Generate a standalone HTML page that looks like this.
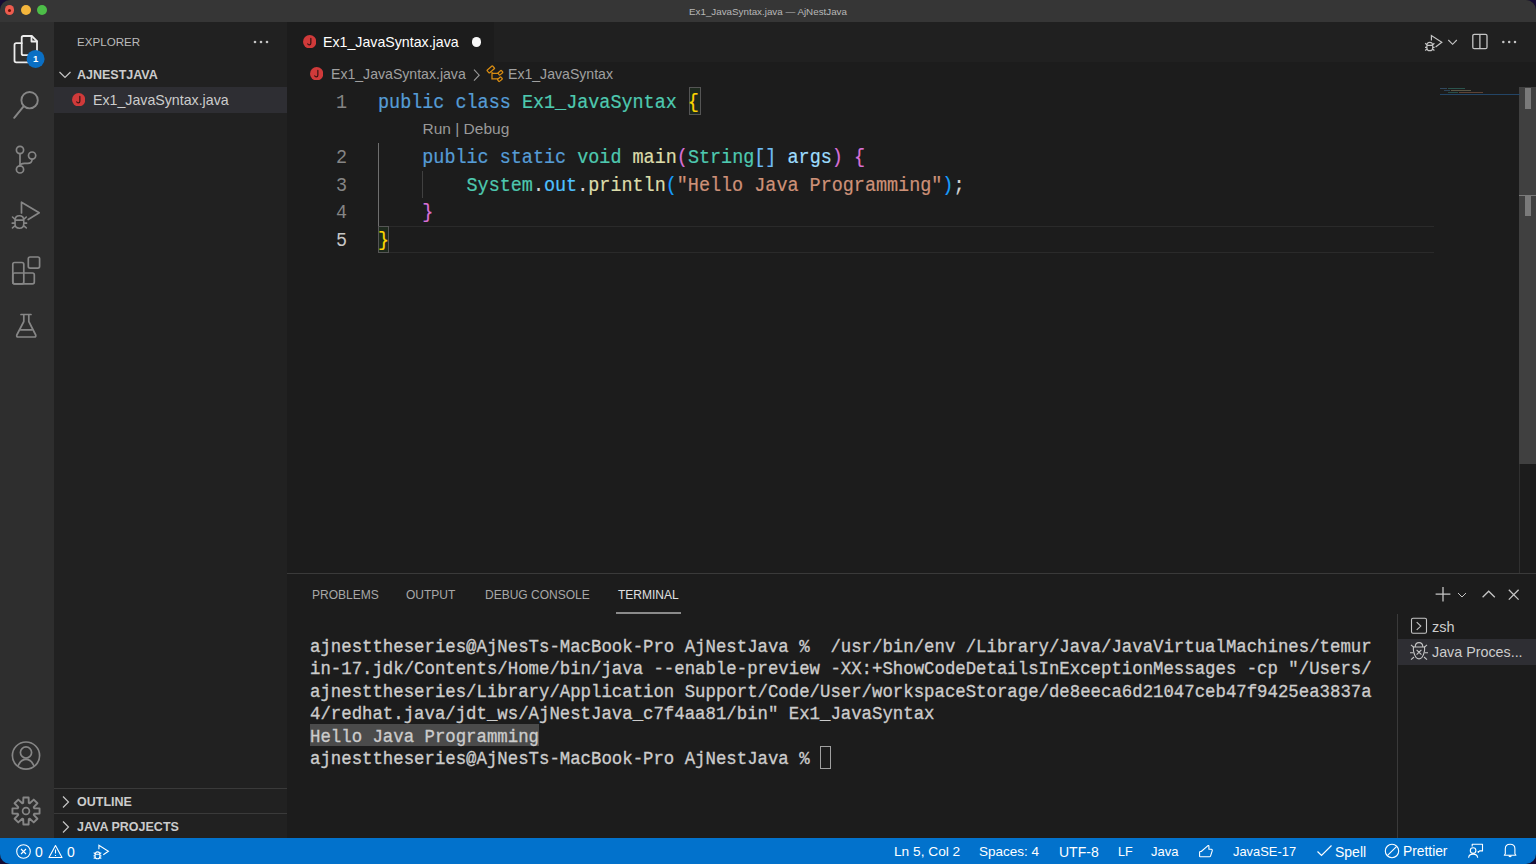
<!DOCTYPE html>
<html><head><meta charset="utf-8">
<style>
*{margin:0;padding:0;box-sizing:border-box}
html,body{width:1536px;height:864px;overflow:hidden;background:#160c34;font-family:"Liberation Sans",sans-serif}
.a{position:absolute}
.mono{font-family:"Liberation Mono",monospace}
#title{left:0;top:0;width:1536px;height:22px;background:#363636}
#act{left:0;top:22px;width:54px;height:816px;background:#2e2e2e}
#side{left:54px;top:22px;width:233px;height:816px;background:#212121}
#tabs{left:287px;top:22px;width:1249px;height:40px;background:#202020}
#editor{left:287px;top:62px;width:1249px;height:512px;background:#1c1c1c}
#panel{left:287px;top:574px;width:1249px;height:264px;background:#1c1c1c}
#pborder{left:287px;top:573px;width:1249px;height:1px;background:#3a3a3a}
#status{left:0;top:838px;width:1536px;height:26px;background:#0272cc;color:#fff}
.ln{position:absolute;left:0;width:60px;text-align:right;color:#858585;font-size:18.45px;transform:scaleY(1.13);transform-origin:0 18.7px}
.code{position:absolute;left:91px;font-size:18.45px;white-space:pre;color:#d4d4d4;-webkit-text-stroke:0.2px;transform:scaleY(1.13);transform-origin:0 18.7px}
.kw{color:#569cd6}.ty{color:#4ec9b0}.fn{color:#dcdcaa}.str{color:#ce9178}.var{color:#9cdcfe}.br1{color:#ffd700}.br2{color:#da70d6}.br3{color:#179fff}.cst{color:#4fc1ff}.arr{color:#6fbdf2}
.term{position:absolute;left:23px;font-size:17.35px;white-space:pre;color:#cccccc;line-height:22.4px;-webkit-text-stroke:0.3px #cccccc;transform:translateY(1.8px) scaleY(1.1);transform-origin:0 15.8px}
.sb{position:absolute;top:0.7px;height:26px;line-height:26px;font-size:14px;color:#fff;white-space:nowrap}
</style></head><body>
<div class="a" id="win" style="left:0;top:0;width:1536px;height:864px;border-radius:10px;overflow:hidden;background:#1c1c1c">
<div id="title" class="a">
  <div class="a" style="left:4.6px;top:5.4px;width:9.8px;height:9.8px;border-radius:50%;background:#ee5c4e"><div class="a" style="left:3.3px;top:3.3px;width:3.2px;height:3.2px;border-radius:50%;background:#701205"></div></div>
  <div class="a" style="left:20.6px;top:5.2px;width:10px;height:10px;border-radius:50%;background:#f4b63c"></div>
  <div class="a" style="left:36.6px;top:5.2px;width:10px;height:10px;border-radius:50%;background:#4dbe48"></div>
  <div class="a" style="left:0;top:0.7px;width:1536px;text-align:center;line-height:22px;font-size:9.8px;color:#b8b8b8">Ex1_JavaSyntax.java — AjNestJava</div>
</div>
<div id="act" class="a">
  <svg class="a" style="left:0;top:0" width="54" height="816" viewBox="0 22 54 816" fill="none" stroke="#868686" stroke-width="1.7" stroke-linejoin="round" stroke-linecap="round">
    <!-- files -->
    <g stroke="#ececec" stroke-width="1.8" stroke-linejoin="round">
      <path d="M23.5 36 H31.8 L37 41.2 V53.5 Q37 55.2 35.3 55.2 H23.5 Q21.7 55.2 21.7 53.5 V37.8 Q21.7 36 23.5 36 Z"/>
      <path d="M31.5 36.2 V41.5 H36.8"/>
      <path d="M21.7 43.2 H16.3 Q14.5 43.2 14.5 45 V60.6 Q14.5 62.4 16.3 62.4 H29"/>
    </g>
    <circle cx="35.6" cy="58.9" r="9" fill="#0a6fc4" stroke="none"/>
    <text x="35.7" y="62.4" fill="#fff" stroke="none" font-family="Liberation Sans" font-weight="bold" font-size="9.5" text-anchor="middle">1</text>
    <!-- search -->
    <circle cx="29.6" cy="100.2" r="8.2" stroke-width="1.9"/>
    <path d="M23.6 106.4 L14.2 117.8" stroke-width="2"/>
    <!-- scm -->
    <circle cx="20" cy="150" r="3.6"/>
    <circle cx="32.1" cy="155.6" r="3.6"/>
    <circle cx="20" cy="169.4" r="3.6"/>
    <path d="M20 153.6 V165.8"/>
    <path d="M32.1 159.3 Q32.1 163.4 27.5 163.4 H24.5 Q20.4 163.4 20 165.8"/>
    <!-- run debug -->
    <path d="M21.5 213 V202.2 L39.2 212.8 L28.2 219.5"/>
    <g transform="translate(19.4 215.8) scale(1.5)" stroke-width="1.07"><path d="M-2.9 3 Q-2.9 0 0 0 Q2.9 0 2.9 3 V5.5 Q2.9 8.3 0 8.3 Q-2.9 8.3 -2.9 5.5 Z M-2.9 2.9 H2.9 M-2.9 2.4 L-4.6 0.8 M2.9 2.4 L4.6 0.8 M-2.9 4.9 H-4.8 M2.9 4.9 H4.8 M-2.8 6.6 L-4.6 8.1 M2.8 6.6 L4.6 8.1"/></g>
    <!-- extensions -->
    <rect x="12.8" y="262.5" width="11" height="21.3" rx="1.8"/>
    <rect x="12.8" y="273" width="21.5" height="10.8" rx="1.8"/>
    <rect x="28.3" y="257" width="11.3" height="11.1" rx="1.8"/>
    <!-- testing flask -->
    <path d="M21 314.5 H31 M23.8 314.5 V321.5 L16.8 335 Q16.3 337 18 337 H34.5 Q36.2 337 35.7 335 L28.8 321.5 V314.5"/>
    <path d="M20.5 329.8 H32"/>
    <!-- account -->
    <circle cx="26" cy="755.6" r="13.6"/>
    <circle cx="26" cy="752.5" r="5.6"/>
    <path d="M18.2 765.5 Q21 759.4 26 759.4 Q31 759.4 33.8 765.5"/>
    <!-- gear -->
    <path d="M23.21 802.86 L23.39 797.45 L28.61 797.45 L28.79 802.86 L29.78 803.28 L33.74 799.57 L37.43 803.26 L33.72 807.22 L34.14 808.21 L39.55 808.39 L39.55 813.61 L34.14 813.79 L33.72 814.78 L37.43 818.74 L33.74 822.43 L29.78 818.72 L28.79 819.14 L28.61 824.55 L23.39 824.55 L23.21 819.14 L22.22 818.72 L18.26 822.43 L14.57 818.74 L18.28 814.78 L17.86 813.79 L12.45 813.61 L12.45 808.39 L17.86 808.21 L18.28 807.22 L14.57 803.26 L18.26 799.57 L22.22 803.28 Z" stroke-width="1.9"/>
    <circle cx="26" cy="811" r="3.4"/>
  </svg>
</div>
<div id="side" class="a">
  <div class="a" style="left:23px;top:12.8px;font-size:11.6px;color:#bbbbbb">EXPLORER</div>
  <svg class="a" style="left:198px;top:17px" width="18" height="6"><circle cx="3" cy="3" r="1.3" fill="#c5c5c5"/><circle cx="9" cy="3" r="1.3" fill="#c5c5c5"/><circle cx="15" cy="3" r="1.3" fill="#c5c5c5"/></svg>
  <svg class="a" style="left:4px;top:48px" width="14" height="10"><path d="M1.5 2 L7 7.5 L12.5 2" fill="none" stroke="#c5c5c5" stroke-width="1.2"/></svg>
  <div class="a" style="left:23px;top:46px;font-size:12.5px;font-weight:bold;color:#cccccc">AJNESTJAVA</div>
  <div class="a" style="left:0;top:65px;width:233px;height:26px;background:#2e2e33"></div>
  <svg class="a" style="left:18.00px;top:70.60px" width="13.40" height="13.40" viewBox="0 0 14 14"><circle cx="7" cy="7" r="7" fill="#d03a3a"/><path d="M8.2 3.6 V8.5 Q8.2 10.3 6.5 10.3 Q5.3 10.3 5 9.3" fill="none" stroke="#3a1414" stroke-width="1.3" stroke-linecap="round"/></svg>
  <div class="a" style="left:39px;top:70px;font-size:14.2px;color:#cccccc">Ex1_JavaSyntax.java</div>
  <div class="a" style="left:0;top:766px;width:233px;height:1px;background:#3a3a3a"></div>
  <svg class="a" style="left:7px;top:773px" width="10" height="14"><path d="M2 1.5 L7.5 7 L2 12.5" fill="none" stroke="#c5c5c5" stroke-width="1.2"/></svg>
  <div class="a" style="left:23px;top:772.5px;font-size:12.5px;font-weight:bold;color:#cccccc">OUTLINE</div>
  <div class="a" style="left:0;top:791px;width:233px;height:1px;background:#3a3a3a"></div>
  <svg class="a" style="left:7px;top:798px" width="10" height="14"><path d="M2 1.5 L7.5 7 L2 12.5" fill="none" stroke="#c5c5c5" stroke-width="1.2"/></svg>
  <div class="a" style="left:23px;top:798px;font-size:12.5px;font-weight:bold;color:#cccccc">JAVA PROJECTS</div>
</div>
<div id="tabs" class="a">
  <div class="a" style="left:0;top:0;width:206.5px;height:40px;background:#1c1c1c"></div>
  <svg class="a" style="left:15.80px;top:12.80px" width="13.40" height="13.40" viewBox="0 0 14 14"><circle cx="7" cy="7" r="7" fill="#d03a3a"/><path d="M8.2 3.6 V8.5 Q8.2 10.3 6.5 10.3 Q5.3 10.3 5 9.3" fill="none" stroke="#3a1414" stroke-width="1.3" stroke-linecap="round"/></svg>
  <div class="a" style="left:36px;top:12px;font-size:14.2px;color:#ffffff">Ex1_JavaSyntax.java</div>
  <div class="a" style="left:184.7px;top:15.2px;width:9.4px;height:9.4px;border-radius:50%;background:#f8f8f8"></div>
  <svg class="a" style="left:1130px;top:8px" width="119" height="24" fill="none" stroke="#c5c5c5" stroke-width="1.3">
    <path d="M14.4 10.4 V5.5 L24.8 12.3 L18.6 16.9" stroke-width="1.2"/>
    <g transform="translate(12.8 12.4) scale(1)" stroke-width="1.20"><path d="M-2.9 3 Q-2.9 0 0 0 Q2.9 0 2.9 3 V5.5 Q2.9 8.3 0 8.3 Q-2.9 8.3 -2.9 5.5 Z M-2.9 2.9 H2.9 M-2.9 2.4 L-4.6 0.8 M2.9 2.4 L4.6 0.8 M-2.9 4.9 H-4.8 M2.9 4.9 H4.8 M-2.8 6.6 L-4.6 8.1 M2.8 6.6 L4.6 8.1"/></g>
    <path d="M31.3 10 L35.6 14.3 L39.8 10" stroke-width="1.1"/>
    <rect x="55.8" y="4.3" width="14.2" height="14.4" rx="1.5"/>
    <path d="M62.9 4.3 V18.7"/>
    <circle cx="86.3" cy="12" r="1.25" fill="#c5c5c5" stroke="none"/><circle cx="92.2" cy="12" r="1.25" fill="#c5c5c5" stroke="none"/><circle cx="98" cy="12" r="1.25" fill="#c5c5c5" stroke="none"/>
  </svg>
</div>
<div id="editor" class="a">
  <svg class="a" style="left:22.80px;top:4.80px" width="13.40" height="13.40" viewBox="0 0 14 14"><circle cx="7" cy="7" r="7" fill="#d03a3a"/><path d="M8.2 3.6 V8.5 Q8.2 10.3 6.5 10.3 Q5.3 10.3 5 9.3" fill="none" stroke="#3a1414" stroke-width="1.3" stroke-linecap="round"/></svg>
  <div class="a" style="left:44px;top:4px;font-size:14.1px;color:#a0a0a0">Ex1_JavaSyntax.java</div>
  <svg class="a" style="left:185px;top:6px" width="10" height="14"><path d="M2 1.6 L7.2 7.2 L2 12.6" fill="none" stroke="#9a9a9a" stroke-width="1.1"/></svg>
  <svg class="a" style="left:199px;top:3px" width="20" height="20" fill="none" stroke="#d88c12" stroke-width="1.25"><rect x="1.2" y="2.6" width="7.2" height="3.6" rx="0.6" transform="rotate(-40 4.8 4.4)"/><rect x="12.2" y="6.3" width="4.4" height="2.8" rx="0.5" transform="rotate(-40 14.4 7.7)"/><rect x="11.7" y="12.8" width="4.4" height="2.8" rx="0.5" transform="rotate(-40 13.9 14.2)"/><path d="M6 7 V13.9 H12 M6 8.3 H12.2"/></svg>
  <div class="a" style="left:221px;top:4px;font-size:14.1px;color:#a0a0a0">Ex1_JavaSyntax</div>
  <div class="a" style="left:135.5px;top:57.5px;font-size:15.5px;color:#999999">Run | Debug</div>
  <div class="a" style="left:91px;top:81px;width:1px;height:110px;background:#6e6e6e"></div>
  <div class="a" style="left:135px;top:108.5px;width:1px;height:27.5px;background:#404040"></div>
  <div class="a" style="left:91px;top:163.5px;width:1056px;height:27.5px;border-top:1px solid #2a2a2a;border-bottom:1px solid #2a2a2a"></div>
  <div class="a" style="left:402px;top:25px;width:12px;height:28px;border:1px solid #555;background:#1e2a1e"></div>
  <div class="a" style="left:91px;top:164px;width:11px;height:27px;border:1px solid #555;background:#1e2a1e"></div>
  <div class="a" style="left:1232px;top:25px;width:17px;height:377px;background:#404040"></div>
  <div class="a" style="left:1232px;top:402px;width:1px;height:109px;background:#303030"></div>
  <div class="a" style="left:1238px;top:25.5px;width:6px;height:21px;background:#7a7a7a"></div>
  <div class="a" style="left:1232px;top:133px;width:17px;height:1px;background:#7a7a7a"></div>
  <div class="a" style="left:1238px;top:133px;width:6px;height:21px;background:#7a7a7a"></div>
  <div class="a" style="left:1153px;top:32px;width:80px;height:1px;background:#234566"></div>
  <div class="a" style="left:1153px;top:25.5px;width:7px;height:1px;background:#4b7fae;opacity:.45"></div>
  <div class="a" style="left:1161px;top:25.5px;width:17px;height:1px;background:#3f9a8a;opacity:.45"></div>
  <div class="a" style="left:1157px;top:27.5px;width:6px;height:1px;background:#4b7fae;opacity:.4"></div>
  <div class="a" style="left:1164px;top:27.5px;width:20px;height:1px;background:#b9b48a;opacity:.4"></div>
  <div class="a" style="left:1161px;top:29.5px;width:10px;height:1px;background:#3f9a8a;opacity:.4"></div>
  <div class="a" style="left:1172px;top:29.5px;width:24px;height:1px;background:#c08060;opacity:.4"></div>
  <div class="a mono" style="left:0;top:28.2px;width:1249px;line-height:27.5px">
    <div style="position:absolute;left:0;top:0;width:70px;height:165px">
      <div class="ln" style="top:0">1</div>
      <div class="ln" style="top:55px">2</div>
      <div class="ln" style="top:82.5px">3</div>
      <div class="ln" style="top:110px">4</div>
      <div class="ln" style="top:137.5px;color:#c6c6c6">5</div>
    </div>
    <div class="code" style="top:0"><span class="kw">public</span> <span class="kw">class</span> <span class="ty">Ex1_JavaSyntax</span> <span class="br1">{</span></div>
    <div class="code" style="top:55px">    <span class="kw">public</span> <span class="kw">static</span> <span class="ty">void</span> <span class="fn">main</span><span class="br2">(</span><span class="ty">String</span><span class="arr">[]</span> <span class="var">args</span><span class="br2">)</span> <span class="br2">{</span></div>
    <div class="code" style="top:82.5px">        <span class="ty">System</span>.<span class="cst">out</span>.<span class="fn">println</span><span class="br3">(</span><span class="str">"Hello Java Programming"</span><span class="br3">)</span>;</div>
    <div class="code" style="top:110px">    <span class="br2">}</span></div>
    <div class="code" style="top:137.5px"><span class="br1">}</span></div>
  </div>
</div>
<div id="pborder" class="a"></div>
<div id="panel" class="a">
  <div class="a" style="left:25px;top:13.7px;font-size:12px;color:#a8a8a8">PROBLEMS</div>
  <div class="a" style="left:119px;top:13.7px;font-size:12px;color:#a8a8a8">OUTPUT</div>
  <div class="a" style="left:198px;top:13.7px;font-size:12px;color:#a8a8a8">DEBUG CONSOLE</div>
  <div class="a" style="left:331px;top:13.7px;font-size:12px;color:#e0e0e0">TERMINAL</div>
  <div class="a" style="left:329px;top:38px;width:65px;height:2px;background:#8a8a8a"></div>
  <svg class="a" style="left:1140px;top:8px" width="109" height="24" fill="none" stroke="#c5c5c5" stroke-width="1.3">
    <path d="M16 5 V19.5 M8.6 12.2 H23.4"/>
    <path d="M31 11 L35 15 L39 11" stroke-width="1"/>
    <path d="M55.6 15.3 L61.7 9.2 L67.8 15.3"/>
    <path d="M81.8 7.8 L91.6 17.6 M91.6 7.8 L81.8 17.6"/>
  </svg>
  <div class="a" style="left:1110px;top:40px;width:1px;height:224px;background:#3a3a3a"></div>
  <svg class="a" style="left:1123px;top:43px" width="19" height="18" fill="none" stroke="#c5c5c5" stroke-width="1.1"><rect x="1.5" y="1.2" width="15" height="15" rx="1.5"/><path d="M6.7 5.2 L10.8 9.1 L6.7 12.9"/></svg>
  <div class="a" style="left:1145px;top:44.5px;font-size:14.5px;color:#cccccc">zsh</div>
  <div class="a" style="left:1111px;top:65px;width:138px;height:26px;background:#2e2e33"></div>
  <svg class="a" style="left:1122px;top:68px" width="20" height="20" fill="none" stroke="#c5c5c5" stroke-width="1.1"><path d="M6.2 5 Q6.2 0.6 10 0.6 Q13.8 0.6 13.8 5"/><path d="M4.4 5 H15.6 Q16 11 13 15.3 Q10 18.3 7 15.3 Q4 11 4.4 5 Z"/><path d="M7.6 7.8 L12.4 12.6 M12.4 7.8 L7.6 12.6 M2 2.8 L4.8 5.4 M18 2.8 L15.2 5.4 M1 10.7 H4.3 M19 10.7 H15.7 M2 17.6 L5 15 M18 17.6 L15 15"/></svg>
  <div class="a" style="left:1145px;top:69.5px;font-size:14.3px;color:#cccccc">Java Proces...</div>
  <div class="a mono" style="left:0;top:0">
    <div class="term" style="top:61px">ajnesttheseries@AjNesTs-MacBook-Pro AjNestJava %  /usr/bin/env /Library/Java/JavaVirtualMachines/temur</div>
    <div class="term" style="top:83.4px">in-17.jdk/Contents/Home/bin/java --enable-preview -XX:+ShowCodeDetailsInExceptionMessages -cp "/Users/</div>
    <div class="term" style="top:105.8px">ajnesttheseries/Library/Application Support/Code/User/workspaceStorage/de8eeca6d21047ceb47f9425ea3837a</div>
    <div class="term" style="top:128.2px">4/redhat.java/jdt_ws/AjNestJava_c7f4aa81/bin" Ex1_JavaSyntax</div>
    <div class="a" style="left:23px;top:150.2px;width:229px;height:22px;background:#4b4b4b"></div>
    <div class="term" style="top:150.6px">Hello Java Programming</div>
    <div class="term" style="top:173px">ajnesttheseries@AjNesTs-MacBook-Pro AjNestJava % </div>
    <div class="a" style="left:533px;top:172px;width:11px;height:23px;border:1.5px solid #a0a0a0"></div>
  </div>
</div>
<div id="status" class="a">
  <svg class="a" style="left:15px;top:5px" width="64" height="17" fill="none" stroke="#fff" stroke-width="1.1">
    <circle cx="8.5" cy="8.5" r="6.8"/>
    <path d="M6 6 L11 11 M11 6 L6 11"/>
    <path d="M40.5 2.5 L47 14.5 H34 Z" stroke-linejoin="round"/>
    <path d="M40.5 6.5 V10.5 M40.5 12 V13"/>
  </svg>
  <div class="sb" style="left:35px">0</div>
  <div class="sb" style="left:67px">0</div>
  <svg class="a" style="left:92px;top:4px" width="18" height="18" fill="none" stroke="#fff" stroke-width="1.1">
    <path d="M6.9 7.3 V3.2 L16.4 9.3 L11.3 12.7"/>
    <g transform="translate(5.5 9.9) scale(0.82)" stroke-width="1.34"><path d="M-2.9 3 Q-2.9 0 0 0 Q2.9 0 2.9 3 V5.5 Q2.9 8.3 0 8.3 Q-2.9 8.3 -2.9 5.5 Z M-2.9 2.9 H2.9 M-2.9 2.4 L-4.6 0.8 M2.9 2.4 L4.6 0.8 M-2.9 4.9 H-4.8 M2.9 4.9 H4.8 M-2.8 6.6 L-4.6 8.1 M2.8 6.6 L4.6 8.1"/></g>
  </svg>
  <div class="sb" style="left:894px;font-size:13.7px">Ln 5, Col 2</div>
  <div class="sb" style="left:979px;font-size:13.5px">Spaces: 4</div>
  <div class="sb" style="left:1059px">UTF-8</div>
  <div class="sb" style="left:1118px;font-size:12.6px">LF</div>
  <div class="sb" style="left:1151px;font-size:13px">Java</div>
  <svg class="a" style="left:1198px;top:5px" width="17" height="16" fill="none" stroke="#fff" stroke-width="1.1" stroke-linejoin="round"><path d="M1.6 13.3 V9.2 Q1.6 8.5 2.4 8.5 H3.2 L10 2.6 Q10.9 2.2 10.9 3.2 V6.3 H13.3 Q14.6 6.5 14.2 7.8 L12.6 12.8 Q12.3 13.8 11.4 13.8 H2.2 Q1.6 13.8 1.6 13.3 Z"/></svg>
  <div class="sb" style="left:1233px;font-size:12.9px">JavaSE-17</div>
  <svg class="a" style="left:1316px;top:6px" width="17" height="14" fill="none" stroke="#fff" stroke-width="1.2"><path d="M1.5 7.5 L5.5 11.5 L15.5 1.5"/></svg>
  <div class="sb" style="left:1335px">Spell</div>
  <svg class="a" style="left:1384px;top:5px" width="16" height="16" fill="none" stroke="#fff" stroke-width="1.1"><circle cx="8" cy="8" r="6.7"/><path d="M3.3 12.7 L12.7 3.3"/></svg>
  <div class="sb" style="left:1403px;font-size:13.8px">Prettier</div>
  <svg class="a" style="left:1467px;top:5px" width="17" height="16" fill="none" stroke="#fff" stroke-width="1.1" stroke-linejoin="round"><circle cx="6.1" cy="7.6" r="2.8"/><path d="M1.6 14.8 Q1.9 11.1 6.1 11.1 Q10.3 11.1 10.7 14.8"/><path d="M5.2 3.6 V1.3 H15.5 V7.9 H12.6 L11.2 9.3 V8.1"/></svg>
  <svg class="a" style="left:1503px;top:5px" width="15" height="16" fill="none" stroke="#fff" stroke-width="1.1" stroke-linejoin="round"><path d="M1.3 12.3 H12.9 L11.9 10.7 V5.8 Q11.9 1.3 7.1 1.3 Q2.3 1.3 2.3 5.8 V10.7 Z"/><path d="M5.8 12.6 Q7.1 14.6 8.4 12.6"/></svg>
</div>
</div>
</body></html>
